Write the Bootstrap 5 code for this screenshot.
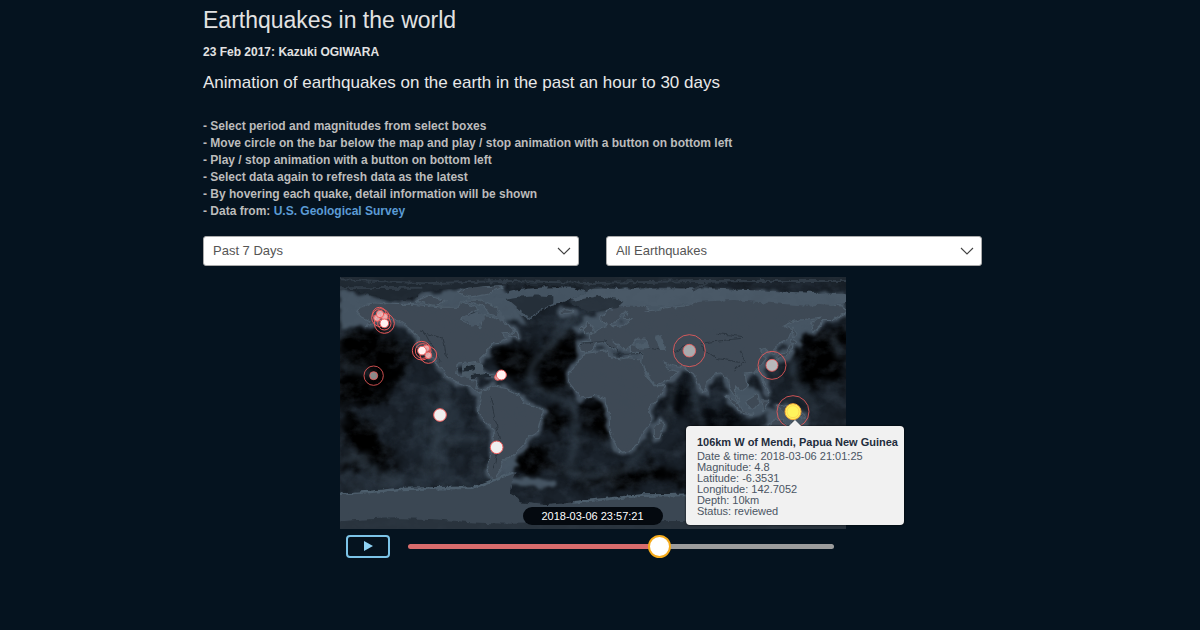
<!DOCTYPE html>
<html lang="en">
<head>
<meta charset="utf-8">
<meta name="viewport" content="width=device-width, initial-scale=1">
<title>Earthquakes in the world</title>
<link href="https://cdn.jsdelivr.net/npm/bootstrap@5.3.0/dist/css/bootstrap.min.css" rel="stylesheet">
<style>
body { background: #05131f; color: #bcbcbc; font-family: "Liberation Sans", Arial, sans-serif; font-size: 12px; line-height: 17px; padding-right: 15px; }
.page { max-width: 779px; }
h1 { font-size: 23px; line-height: 28px; font-weight: 400; color: #e2e2e2; padding-top: 6px; }
.byline { color: #e2e2e2; font-weight: 700; margin-top: 10px; }
h2 { font-size: 17px; line-height: 24px; font-weight: 400; color: #e8e8e8; margin-top: 10px; }
.notes { font-weight: 700; padding-top: 23px; }
.notes a { color: #5b9bd5; text-decoration: none; }
.filters { display: grid; grid-template-columns: repeat(auto-fit, minmax(240px, 1fr)); gap: 12px 27px; }
.form-select { height: 30px; padding: 0 32px 0 9px; font-size: 13px; line-height: 28px; color: #555; background-color: #fff; border: 1px solid #aaa; border-radius: 3px; background-size: 14px 10px; background-position: right 7px center;
  background-image: url("data:image/svg+xml,%3Csvg xmlns='http://www.w3.org/2000/svg' viewBox='0 0 14 10'%3E%3Cpath d='M1 2l6 6 6-6' fill='none' stroke='%23444' stroke-width='1.1'/%3E%3C/svg%3E"); }
.player { max-width: 506px; padding-top: 11px; }
.quake-tip { left: 90%; top: 59%; width: 218px; transform: translateX(-50%); background: #f1f1f1; color: #4b5563; border-radius: 4px; padding: 8px 11px; font-size: 11px; line-height: 11px; white-space: nowrap; box-shadow: 0 0 2px #000; }
.quake-tip::before { content: ""; position: absolute; left: 50%; top: -6px; margin-left: -6px; border: 6px solid transparent; border-top: 0; border-bottom-color: #f1f1f1; }
.quake-tip strong { color: #1f2d3d; line-height: 17px; }
.clock { left: 50%; bottom: 4px; transform: translateX(-50%); width: 140px; height: 18px; line-height: 18px; font-size: 11px; color: #fff; background: #04090f; border-radius: 9px; }
.controls { gap: 18px; padding: 5px 12px 0 6px; }
.play { width: 44px; height: 23px; border: 2px solid #7cc4e8; border-radius: 4px; color: #8fd3f5; }
.timeline { -webkit-appearance: none; appearance: none; height: 24px; background: none; min-width: 0; }
.timeline::-webkit-slider-runnable-track { height: 5px; border-radius: 3px; background: linear-gradient(to right, #d96c6c var(--played), #9c9c9c var(--played)); }
.timeline::-webkit-slider-thumb { -webkit-appearance: none; width: 23px; height: 23px; margin-top: -9px; border-radius: 50%; background: #fff; border: 2px solid #f5ab1c; }
</style>
</head>
<body>
<main class="page mx-auto">
  <h1 class="mb-0">Earthquakes in the world</h1>
  <p class="byline mb-0">23 Feb 2017: Kazuki OGIWARA</p>
  <h2 class="mb-0">Animation of earthquakes on the earth in the past an hour to 30 days</h2>
  <div class="notes">
    - Select period and magnitudes from select boxes<br>
    - Move circle on the bar below the map and play / stop animation with a button on bottom left<br>
    - Play / stop animation with a button on bottom left<br>
    - Select data again to refresh data as the latest<br>
    - By hovering each quake, detail information will be shown<br>
    - Data from: <a href="#">U.S. Geological Survey</a>
  </div>
  <div class="filters mt-3">
    <select class="form-select" aria-label="Period"><option>Past 7 Days</option></select>
    <select class="form-select" aria-label="Magnitude"><option>All Earthquakes</option></select>
  </div>

  <div class="player mx-auto">
    <div class="position-relative">
      <svg class="d-block w-100" viewBox="0 6 1518 756" role="img" aria-label="World map of earthquakes" color-interpolation-filters="sRGB">
        <defs>
          <filter id="blurWide" x="-50%" y="-50%" width="200%" height="200%"><feTurbulence type="fractalNoise" baseFrequency=".02" numOctaves="4" seed="9" result="n"/><feGaussianBlur in="SourceGraphic" stdDeviation="14" result="s"/><feDisplacementMap in="s" in2="n" scale="90" xChannelSelector="R" yChannelSelector="G"/><feGaussianBlur stdDeviation="3"/></filter>
          <filter id="blurRidge" x="-50%" y="-50%" width="200%" height="200%"><feGaussianBlur stdDeviation="9"/></filter>
          <filter id="blurShelf" x="-5%" y="-5%" width="110%" height="110%"><feTurbulence type="fractalNoise" baseFrequency=".03" numOctaves="3" seed="5" result="n"/><feDisplacementMap in="SourceGraphic" in2="n" scale="30" xChannelSelector="R" yChannelSelector="G"/><feGaussianBlur stdDeviation="4"/></filter>
          <filter id="grain" x="0" y="0" width="100%" height="100%"><feTurbulence type="fractalNoise" baseFrequency=".018 .025" numOctaves="5" seed="8"/><feColorMatrix values="0 0 0 0 .24  0 0 0 0 .29  0 0 0 0 .34  2.6 0 0 0 -1.15"/></filter>
          <filter id="dark" x="0" y="0" width="100%" height="100%"><feTurbulence type="fractalNoise" baseFrequency=".02" numOctaves="5" seed="21"/><feColorMatrix values="0 0 0 0 0  0 0 0 0 0  0 0 0 0 0  3 0 0 0 -1.3"/></filter>
          <filter id="coast" x="-5%" y="-5%" width="110%" height="110%"><feTurbulence type="fractalNoise" baseFrequency=".05" numOctaves="3" seed="3" result="n"/><feDisplacementMap in="SourceGraphic" in2="n" scale="16" xChannelSelector="R" yChannelSelector="G"/><feGaussianBlur stdDeviation="1"/></filter>
          <g id="land">
            <path d="M-168,66L-162,70-156,71-141,70-128,70-115,69-108,68-96,68-94,72-85,69-82,67-87,65-94,60-92,57-82,55-80,51-78,55-77,60-78,62-70,61-65,59-61,56-56,52-60,50-66,50-64,47-61,46-66,44-70,43-74,40-76,36-81,31-80,26-82,28-84,30-90,29-97,28-98,22-95,18-91,19-88,21-88,16-83,15-84,10-80,9-78,8-82,7-87,12-95,15-105,20-110,28-114,32-118,34-124,40-124,48-131,54-138,59-148,61-152,59-162,55-157,58-165,62Z"/>
            <path d="M-125,73L-118,76-105,73-112,70Z M-90,73L-80,73-68,67-65,62-74,64-78,70Z M-95,79L-85,83-65,83-75,78-88,76Z M-59,48L-53,47-55,51Z M-85,22L-78,22-74,20-82,23Z M-74,19L-68,19-72,20Z"/>
            <path d="M-78,8L-72,12-62,10-52,5-50,0-40,-3-35,-6-38,-13-40,-21-47,-25-49,-29-54,-34-58,-38-62,-39-65,-42-66,-47-69,-51-66,-55-72,-53-75,-48-73,-40-71,-30-70,-19-76,-14-81,-6-80,0Z"/>
            <path d="M-17,15L-16,21-10,30-6,35,10,37,11,33,20,31,25,32,33,31,37,22,43,12,51,12,46,3,40,-3,40,-15,35,-21,32,-28,26,-34,19,-35,15,-27,12,-17,13,-8,9,0,9,4,2,6,-8,4Z"/>
            <path d="M50,-16L48,-13,44,-18,44,-25,47,-25Z"/>
            <path d="M-9,37L-9,43-2,44-2,48,4,52,9,54,11,57,14,54,22,55,28,60,22,60,25,65,20,64,17,60,13,56,6,58,6,62,15,68,26,71,40,67,36,65,44,66,54,68,67,69,73,72,90,75,104,77,115,74,140,72,160,70,178,69,180,65,170,60,163,60,162,56,157,51,156,57,163,62,143,59,135,55,141,52,139,47,129,41,129,35,126,36,122,40,118,39,122,31,115,22,108,21,109,12,105,9,101,13,101,7,104,1,98,10,97,17,91,22,87,21,80,15,78,8,74,16,72,21,66,25,57,27,50,30,52,25,60,22,54,17,44,13,35,28,36,36,27,37,27,41,40,41,38,46,32,46,28,43,23,38,19,42,13,45,18,40,16,38,9,44,3,43-1,38-6,36Z"/>
            <path d="M-5,50L1,51-2,56-4,58-5,54Z M-10,52L-6,54-8,55Z M-23,64L-14,65-18,66-23,66Z M131,31L137,34,141,37,142,42,139,36,132,34Z M141,43L145,43,142,45Z M143,47L142,54,144,50Z M80,8L82,7,80,10Z"/>
            <path d="M95,5L104,-1,106,-6,101,-2Z M105,-7L114,-8,106,-6Z M109,1L117,6,118,1,115,-4,110,-2Z M120,1L124,1,121,-5Z M121,18L122,13,125,7,122,14Z M131,-1L141,-3,150,-10,143,-8,138,-8Z"/>
            <path d="M114,-22L122,-18,130,-12,136,-12,136,-15,140,-18,142,-11,146,-19,153,-26,150,-37,144,-39,138,-34,130,-32,116,-34Z M167,-46L174,-40,178,-38,173,-43Z"/>
            <path d="M12,79L25,80,17,76Z M52,71L58,75,68,77,56,72Z"/>
          </g>
        </defs>
        <rect y="6" width="1518" height="756" fill="#1a222b"/>
        <g filter="url(#blurWide)">
          <path d="M0,175L110,165 180,190 210,260 140,370 0,400Z M640,190L740,190 720,240 680,330 750,370 830,390 800,500 740,480 730,360 600,340 590,270Z M1370,190L1518,150 1518,330 1360,320Z M0,410L110,450 170,590 30,580Z" fill="#000"/>
          <path d="M440,210L560,205 600,250 550,330 590,360 510,320Z M615,400L690,390 680,490 620,470Z M530,540L620,520 650,590 510,590Z M780,590L1000,570 1060,620 700,640Z" fill="#000"/>
          <path d="M0,600L180,600 500,610 400,640 0,660Z M640,110L760,90 720,170 640,180Z M240,350H370L330,610H240Z" fill="#27323d"/>
          <path d="M970,300L1050,300 1050,400 960,410Z M1080,400L1200,410 1200,560 1060,500Z" fill="#05080c"/>
        </g>
        <g fill="none" stroke="#34414d" stroke-width="13" filter="url(#blurRidge)">
          <path d="M720,120Q660,150 650,200Q560,260 570,320Q640,370 700,390Q720,500 680,590Q780,620 860,580L980,440 1000,330"/>
          <path d="M320,300Q320,390 290,430L285,610M300,490L440,490M0,270L100,300M30,520Q80,600 200,620M0,560L90,540M1060,290L1070,400 1110,520M1475,180L1500,250M1350,240L1370,340 1430,400"/>
        </g>
        <rect y="6" width="1518" height="756" filter="url(#grain)" opacity=".22"/>
        <rect y="6" width="1518" height="756" filter="url(#dark)" opacity=".2"/>
        <g filter="url(#blurShelf)">
          <g transform="translate(759 384) scale(4.217 -4.2)"><use href="#land" fill="none" stroke="#465462" stroke-width="5" stroke-linejoin="round"/></g>
          <g fill="#465563">
            <path d="M0,45L130,72 180,95 150,130 100,145 0,162Z M690,75L760,40 1100,38 1518,60V110H1100L850,105Z M740,120L800,130 780,175 740,185 700,160Z M1140,300L1240,345 1290,410 1240,430 1180,385Z M1290,400L1400,425 1400,455 1270,440Z M1240,210L1290,235 1270,310 1210,290Z M1350,150L1410,130 1420,170 1370,190Z M500,540L540,570 500,610 640,612 655,630 620,640 480,622Z M240,60L480,35 530,90 560,140 440,130Z"/>
          </g>
        </g>
        <g filter="url(#coast)">
          <g transform="translate(759 384) scale(4.217 -4.2)">
            <use href="#land" fill="none" stroke="#50606e" stroke-width="1.6" stroke-linejoin="round"/>
            <use href="#land" fill="#3e4955"/>
          </g>
          <path d="M690,72L760,42 1100,40 1518,58V85L1400,92 1180,75 1080,80 980,95 870,92 760,100Z" fill="#4a5967"/>
          <path d="M460,66Q540,32 700,38L740,52 660,85 600,105 573,133 545,125 520,95 500,70Z" fill="#455462"/>
          <path d="M500,72Q560,56 640,64L640,86 595,105 572,128 545,110Z" fill="#252f39"/>
          <path d="M690,80L780,62 850,80 830,100 740,110Z" fill="#28323c"/>
          <path d="M365,125L410,112 435,125 425,148 395,155Z M465,100L500,130 480,140Z" fill="#4a5967"/>
          <path d="M1080,205L1200,190M1080,215L1130,250 1200,262M1130,175L1210,185M1000,230L1060,210M720,205L790,200M790,195L850,240M900,215L960,225M240,170L310,190 320,250M250,165L300,260M450,360L465,430 480,500 460,580M1200,230L1215,260 1180,285M820,240L910,235" fill="none" stroke="#2b353f" stroke-width="3"/>
          <path d="M945,185L965,180 978,225 960,225Z M880,210L920,200 930,220 885,222Z M905,262L925,300 945,325 935,325 915,300Z" fill="#4d5d6b"/>
          <path d="M-10,-6H1530V22L1130,20 1080,38 740,35 500,28 250,50 200,75 130,72 60,50 -10,38Z" fill="#1f2831"/>
          <path d="M-10,12L250,25 500,18 760,24 1080,18 1530,18M1060,45L1100,20 1250,18M0,40L250,38" fill="none" stroke="#303b46" stroke-width="6"/>
          <path d="M-10,655L180,642 400,638 470,615 510,592 530,592 515,620 510,650 540,682 620,690 720,680 900,662 1040,655 1250,640 1530,655V775H-10Z" fill="#3b4753"/>
          <path d="M-10,657Q90,652 180,642L400,638 470,612 520,592M700,682L900,662 1040,660" fill="none" stroke="#4d5e6c" stroke-width="8"/>
          <path d="M-10,740Q180,720 350,738T760,735L1530,745V775H-10Z" fill="#29333d"/>
          <path d="M370,270Q400,255 430,268L430,305 405,315 365,300Z" fill="#4b5a67"/><path d="M378,275L408,267 400,286 370,290Z M392,300L440,294 455,310 395,312Z" fill="#1d262f"/>
        </g>
        <rect y="6" width="1518" height="756" filter="url(#grain)" opacity=".15"/>

        <g fill="#fff" fill-opacity=".8" stroke="#ef5b5b" stroke-width="3">
          <g fill="none"><circle cx="118" cy="117" r="20"/><circle cx="122" cy="128" r="27"/><circle cx="133" cy="145" r="30"/><circle cx="133" cy="145" r="20"/><circle cx="245" cy="227" r="28"/><circle cx="248" cy="228" r="22"/><circle cx="265" cy="240" r="25"/></g>
          <g fill="#fcc4c4"><circle cx="111" cy="129" r="10"/><circle cx="134" cy="125" r="10"/><circle cx="120" cy="117" r="11"/><circle cx="259" cy="220" r="10"/><circle cx="265" cy="241" r="10"/><circle cx="473" cy="307" r="9"/></g>
          <g fill="#fff1f1" fill-opacity="1"><circle cx="133" cy="145" r="13"/><circle cx="246" cy="227" r="13"/><circle cx="484" cy="300" r="15"/></g>
          <g fill="#efefef" fill-opacity="1"><circle cx="300" cy="420" r="19"/><circle cx="470" cy="517" r="19"/></g>
          <g stroke-width="2.5"><circle cx="101" cy="302" r="29" fill="none"/><circle cx="101" cy="302" r="12" fill="#aaa"/>
          <circle cx="1048" cy="227" r="48" fill="none"/><circle cx="1048" cy="227" r="19" fill="#c4c4c4"/>
          <circle cx="1296" cy="271" r="42" fill="none"/><circle cx="1296" cy="271" r="18" fill="#ddd"/>
          <circle cx="1359" cy="410" r="48" fill="none"/></g>
          <circle cx="1359" cy="410" r="24" fill="#fff45c" fill-opacity="1" stroke="#f7a63a"/>
          <circle cx="1359" cy="410" r="18" fill="none" stroke="#f9c94a" stroke-width="2"/>
        </g>
      </svg>
      <div class="clock position-absolute text-center">2018-03-06 23:57:21</div>
      <div class="quake-tip position-absolute" role="tooltip">
        <strong class="d-block">106km W of Mendi, Papua New Guinea</strong>
        Date &amp; time: 2018-03-06 21:01:25<br>Magnitude: 4.8<br>Latitude: -6.3531<br>Longitude: 142.7052<br>Depth: 10km<br>Status: reviewed
      </div>
    </div>
    <div class="controls d-flex align-items-center">
      <button class="play btn p-0 d-flex align-items-center justify-content-center flex-shrink-0" type="button" aria-label="Play">
        <svg width="10" height="12" viewBox="0 0 10 12" fill="currentColor"><path d="M1 1l9 5-9 5z"/></svg>
      </button>
      <input class="timeline flex-grow-1 p-0 m-0" type="range" min="0" max="1000" value="598" aria-label="Time" style="--played: 59%">
    </div>
  </div>
</main>
<script src="https://cdn.jsdelivr.net/npm/bootstrap@5.3.0/dist/js/bootstrap.bundle.min.js"></script>
</body>
</html>
